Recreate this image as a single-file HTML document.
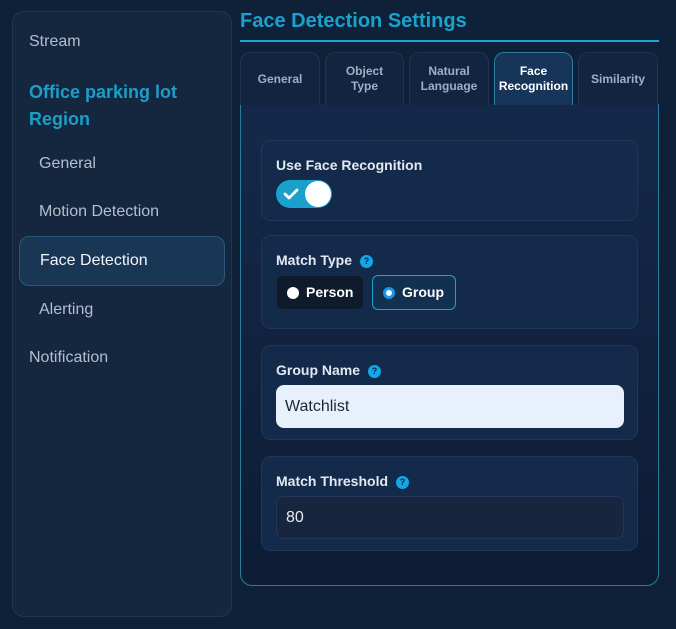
<!DOCTYPE html>
<html><head><meta charset="utf-8"><style>
*{margin:0;padding:0;box-sizing:border-box}
body{width:676px;height:629px;background:#0f2039;font-family:"Liberation Sans",sans-serif;position:relative;overflow:hidden}
.a{position:absolute}
.side{left:12px;top:11px;width:220px;height:606px;background:#15263f;border:1px solid #223752;border-radius:12px}
.si{position:absolute;font-size:16px;color:#b3bfcf;white-space:nowrap}
.tab{position:absolute;top:52px;height:53px;background:#132441;border:1px solid #1f3452;border-bottom:none;border-radius:10px 10px 0 0;color:#9fb0c4;font-size:12px;font-weight:bold;text-align:center;display:flex;align-items:center;justify-content:center;line-height:15px}
.card{position:absolute;left:261px;width:377px;background:#142a4b;border:1px solid #213758;border-radius:10px}
.lbl{position:absolute;left:14px;font-size:14px;font-weight:bold;color:#e3e9f1;white-space:nowrap}
.q{display:inline-block;width:13px;height:13px;border-radius:50%;background:#12a7e8;color:#0d2140;font-size:9px;text-align:center;line-height:13px;margin-left:8px;vertical-align:1px}
</style></head><body>
<div class="a side"></div>
<div class="si" style="left:29px;top:33px">Stream</div>
<div class="si" style="left:29px;top:79px;font-size:18px;font-weight:bold;color:#1b9fca;line-height:27px">Office parking lot<br>Region</div>
<div class="si" style="left:39px;top:155px">General</div>
<div class="si" style="left:39px;top:203px">Motion Detection</div>
<div class="a" style="left:19px;top:236px;width:206px;height:50px;background:#193655;border:1px solid #2b5876;border-radius:10px"></div>
<div class="si" style="left:40px;top:252px;color:#f2f5f9">Face Detection</div>
<div class="si" style="left:39px;top:301px">Alerting</div>
<div class="si" style="left:29px;top:349px">Notification</div>

<div class="a" style="left:240px;top:10px;font-size:20px;font-weight:bold;color:#18a3cc">Face Detection Settings</div>
<div class="a" style="left:240px;top:40px;width:419px;height:2px;background:#1aa7d3"></div>

<div class="a" style="left:240px;top:104px;width:419px;height:482px;border:1px solid #2a7c9c;border-top:none;border-radius:0 0 12px 12px;background:linear-gradient(#14294a,#0e1c34)"></div>
<div class="tab" style="left:240px;width:80px">General</div>
<div class="tab" style="left:325px;width:79px">Object<br>Type</div>
<div class="tab" style="left:409px;width:80px">Natural<br>Language</div>
<div class="tab" style="left:494px;width:79px;background:#173459;border-color:#2c7c9e;color:#fff">Face<br>Recognition</div>
<div class="tab" style="left:578px;width:80px">Similarity</div>

<div class="card" style="top:140px;height:81px">
 <div class="lbl" style="top:16px">Use Face Recognition</div>
 <div class="a" style="left:14px;top:39px;width:56px;height:28px;border-radius:14px;background:#1b9fcb">
  <svg class="a" style="left:7px;top:8px" width="16" height="12" viewBox="0 0 16 12"><path d="M2 6l4 4 8-8" stroke="#fff" stroke-width="2.8" fill="none" stroke-linecap="round" stroke-linejoin="round"/></svg>
  <div class="a" style="left:29px;top:1px;width:26px;height:26px;border-radius:50%;background:#fff"></div>
 </div>
</div>
<div class="card" style="top:235px;height:94px">
 <div class="lbl" style="top:16px">Match Type<span class="q">?</span></div>
 <div class="a" style="left:14px;top:39px;width:88px;height:35px;background:#0f1a2b;border:1px solid #1a2840;border-radius:6px;color:#fff;font-size:14px;font-weight:bold;line-height:33px;padding-left:29px">Person
  <div class="a" style="left:10px;top:11px;width:12px;height:12px;border-radius:50%;background:#fff"></div></div>
 <div class="a" style="left:110px;top:39px;width:84px;height:35px;background:#12304f;border:1px solid #1fa3c8;border-radius:6px;color:#fff;font-size:14px;font-weight:bold;line-height:33px;padding-left:29px">Group
  <div class="a" style="left:10px;top:11px;width:12px;height:12px;border-radius:50%;background:#fff;border:3px solid #1896e8"></div></div>
</div>
<div class="card" style="top:345px;height:95px">
 <div class="lbl" style="top:16px">Group Name<span class="q">?</span></div>
 <div class="a" style="left:14px;top:39px;width:348px;height:43px;background:#e8f0fc;border-radius:8px;font-size:16px;color:#1e2633;line-height:43px;padding-left:9px">Watchlist</div>
</div>
<div class="card" style="top:456px;height:95px">
 <div class="lbl" style="top:16px">Match Threshold<span class="q">?</span></div>
 <div class="a" style="left:14px;top:39px;width:348px;height:43px;background:#17263e;border:1px solid #25365a;border-radius:8px;font-size:16px;color:#e8edf3;line-height:41px;padding-left:9px">80</div>
</div>
</body></html>
